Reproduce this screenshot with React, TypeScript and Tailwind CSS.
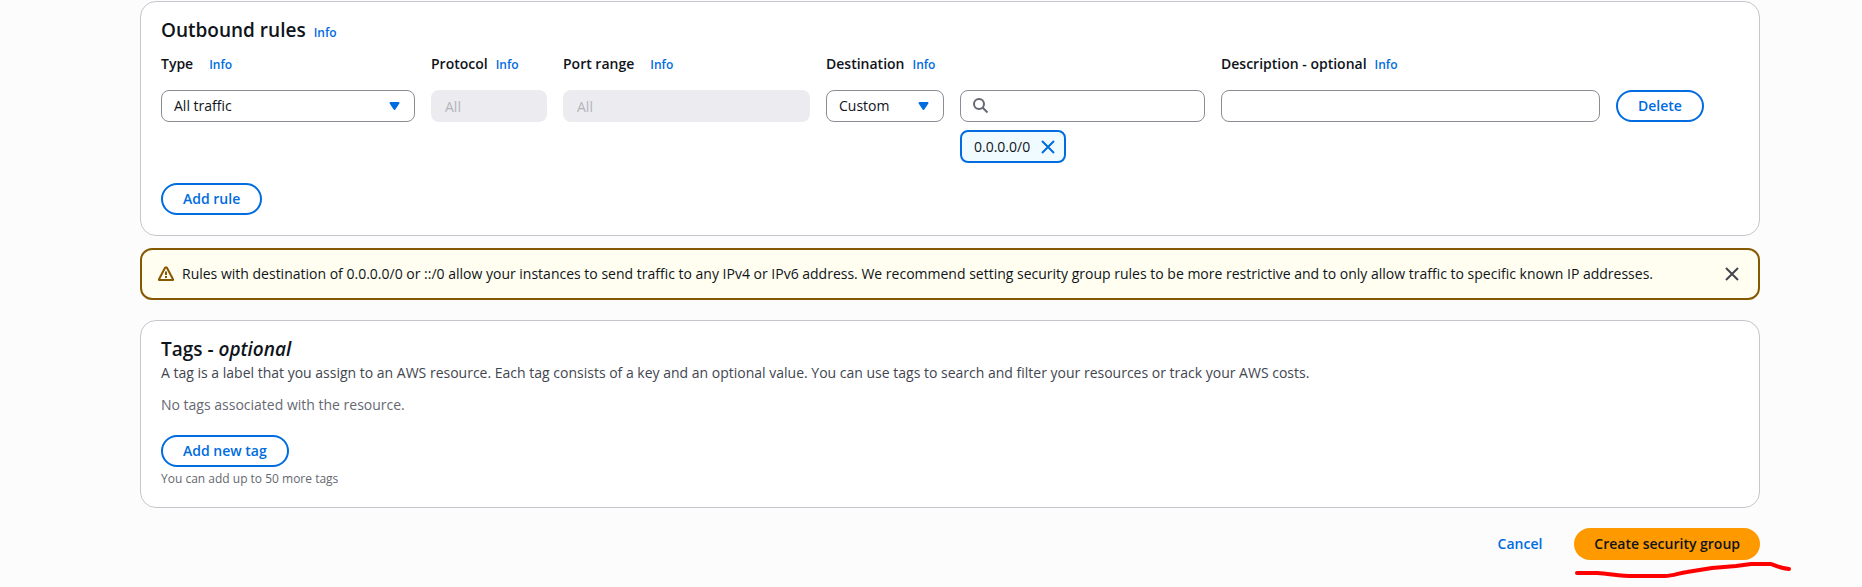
import type { ReactNode, SVGProps } from "react";

const buttonClass =
  "h-8 cursor-pointer whitespace-nowrap rounded-full border-2 border-[#006ce0] bg-white px-5 text-sm font-semibold leading-5 text-[#006ce0]";
const fieldClass =
  "h-8 w-full min-w-0 rounded-lg border border-[#8c8c94] bg-white px-3 text-sm text-[#0f141a]";
const disabledClass =
  "h-8 w-full min-w-0 rounded-lg bg-[#ebebf0] px-3.5 text-sm text-[#b4b4bb] placeholder:text-[#b4b4bb]";
const cardClass = "rounded-2xl border border-[#c6c6cd] bg-white px-5";
const headingClass = "text-[19px] leading-6 font-semibold";

function Info({ topic }: { topic: string }) {
  return (
    <a href="#info" aria-label={`Info about ${topic}`} className="text-xs font-semibold text-[#006ce0]">
      Info
    </a>
  );
}

function ColumnLabel({
  htmlFor,
  children,
  wide = false,
  className = "",
}: {
  htmlFor: string;
  children: string;
  wide?: boolean;
  className?: string;
}) {
  return (
    <div className={`flex items-baseline whitespace-nowrap ${wide ? "gap-4" : "gap-2"} ${className}`}>
      <label htmlFor={htmlFor} className="text-sm font-semibold leading-5">
        {children}
      </label>
      <Info topic={children} />
    </div>
  );
}

function Icon({ children, className = "", ...rest }: SVGProps<SVGSVGElement> & { children: ReactNode }) {
  return (
    <svg
      viewBox="0 0 16 16"
      fill="none"
      stroke="currentColor"
      strokeWidth="2"
      aria-hidden="true"
      className={`size-4 shrink-0 ${className}`}
      {...rest}
    >
      {children}
    </svg>
  );
}

function Close() {
  return (
    <Icon>
      <path d="m2 2 12 12M14 2 2 14" />
    </Icon>
  );
}

function Select({ id, value }: { id: string; value: string }) {
  return (
    <div className="grid items-center">
      <select id={id} className={`col-start-1 row-start-1 appearance-none ${fieldClass}`}>
        <option>{value}</option>
      </select>
      <Icon className="pointer-events-none col-start-1 row-start-1 mr-3 justify-self-end text-[#006ce0]">
        <path d="M3.5 5h8l-4 6z" fill="currentColor" strokeLinejoin="round" />
      </Icon>
    </div>
  );
}

export default function App() {
  return (
    <main className="flex min-h-screen flex-col bg-[#fcfcfd] pt-px pr-[102px] pl-[140px] font-['Open_Sans','Noto_Sans',sans-serif] text-sm leading-5 text-[#0f141a]">
      <section className={`${cardClass} pt-4 pb-5`}>
        <div className="flex items-baseline gap-2">
          <h2 className={headingClass}>Outbound rules</h2>
          <Info topic="outbound rules" />
        </div>
        <div className="mt-3 grid grid-cols-[254fr_116fr_247fr_118fr_245fr_379fr_123fr] gap-x-4 gap-y-4">
          <ColumnLabel htmlFor="type" wide>Type</ColumnLabel>
          <ColumnLabel htmlFor="protocol">Protocol</ColumnLabel>
          <ColumnLabel htmlFor="port" wide>Port range</ColumnLabel>
          <ColumnLabel htmlFor="destination" className="col-span-2">Destination</ColumnLabel>
          <ColumnLabel htmlFor="description" className="col-span-2">Description - optional</ColumnLabel>
          <Select id="type" value="All traffic" />
          <input id="protocol" disabled placeholder="All" className={disabledClass} />
          <input id="port" disabled placeholder="All" className={disabledClass} />
          <Select id="destination" value="Custom" />
          <div className="row-span-2 flex flex-col items-start gap-2">
            <div className="flex h-8 w-full items-center gap-2 rounded-lg border border-[#8c8c94] bg-white px-3">
              <Icon className="text-[#656871]">
                <circle cx="6" cy="6" r="5" />
                <path d="m9.500 9.500 5 5" />
              </Icon>
              <input type="search" aria-label="Destination search" className="w-full min-w-0 bg-transparent outline-none" />
            </div>
            <div className="flex h-[33px] items-center gap-2.5 rounded-lg border-2 border-[#006ce0] bg-[#f0fbff] pr-2 pl-3">
              <span>0.0.0.0/0</span>
              <button type="button" aria-label="Remove 0.0.0.0/0" className="cursor-pointer text-[#006ce0]">
                <Close />
              </button>
            </div>
          </div>
          <input id="description" className={fieldClass} />
          <div>
            <button type="button" className={buttonClass}>Delete</button>
          </div>
        </div>
        <button type="button" className={`mt-5 ${buttonClass}`}>Add rule</button>
      </section>

      <div role="alert" className="mt-3 flex items-center gap-2 rounded-xl border-2 border-[#855900] bg-[#fffef0] px-4 py-3.5">
        <Icon className="text-[#855900]">
          <path d="M7.200 1.500h1.600L15 13.200v.8H1v-.8z" strokeLinejoin="round" />
          <path d="M8 5.500V9M8 10v2" />
        </Icon>
        <p className="flex-1">
          Rules with destination of 0.0.0.0/0 or ::/0 allow your instances to send traffic to any IPv4 or IPv6 address. We
          recommend setting security group rules to be more restrictive and to only allow traffic to specific known IP
          addresses.
        </p>
        <button type="button" aria-label="Dismiss" className="mr-0.5 cursor-pointer text-[#424650]">
          <Close />
        </button>
      </div>

      <section className={`${cardClass} mt-5 pt-4 pb-5`}>
        <h2 className={headingClass}>
          Tags - <em>optional</em>
        </h2>
        <p className="mt-0.5 text-[#424650]">
          A tag is a label that you assign to an AWS resource. Each tag consists of a key and an optional value. You can
          use tags to search and filter your resources or track your AWS costs.
        </p>
        <p className="mt-3 text-[#656871]">No tags associated with the resource.</p>
        <button type="button" className={`mt-5 ${buttonClass}`}>Add new tag</button>
        <p className="mt-1 text-xs leading-4 text-[#656871]">You can add up to 50 more tags</p>
      </section>

      <footer className="relative mt-5 flex items-center justify-end gap-8">
        <a href="#cancel" className="font-semibold text-[#006ce0]">Cancel</a>
        <button type="submit" className="h-8 cursor-pointer rounded-full bg-[#ff9900] px-5 text-sm font-semibold whitespace-nowrap">
          Create security group
        </button>
        <svg
          viewBox="0 0 220 20"
          fill="none"
          aria-hidden="true"
          className="pointer-events-none absolute top-8 -right-8 h-5 w-[220px]"
        >
          <path
            d="M5 13h20c14 1 24 3 36 3h32c8 0 14-3 22-4l25-4 24-2 15-2h20c5 2 9 4 18 5"
            stroke="#ff0000"
            strokeWidth="4"
            strokeLinecap="round"
            strokeLinejoin="round"
          />
        </svg>
      </footer>
    </main>
  );
}
